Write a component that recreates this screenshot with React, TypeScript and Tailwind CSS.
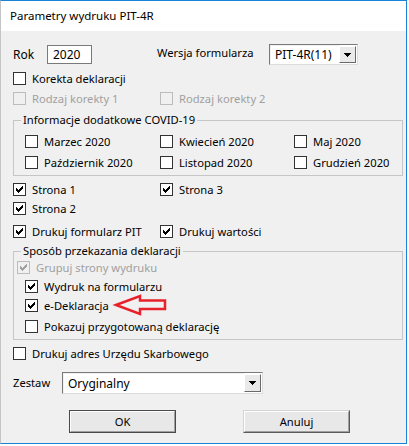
import React from "react";

const CHECK: [number, number][] = [
  [6, 0], [5, 1], [6, 1], [0, 2], [4, 2], [5, 2], [6, 2], [0, 3], [1, 3], [3, 3], [4, 3], [5, 3],
  [0, 4], [1, 4], [2, 4], [3, 4], [4, 4], [1, 5], [2, 5], [3, 5], [2, 6],
];

function Box({ checked = false, disabled = false }: { checked?: boolean; disabled?: boolean }) {
  return (
    <div
      className={
        disabled
          ? "w-[13px] h-[13px] shrink-0 border border-[#bcbcbc] bg-[#f0f0f0]"
          : "w-[13px] h-[13px] shrink-0 border border-[#333333] bg-white"
      }
    >
      {checked && (
        <svg width="11" height="11" viewBox="0 0 11 11" shapeRendering="crispEdges" className="block">
          {CHECK.map(([x, y], i) => (
            <rect key={i} x={x + 2} y={y + 2} width="1" height="1" fill={disabled ? "#a0a0a0" : "#000000"} />
          ))}
        </svg>
      )}
    </div>
  );
}

function Cb({
  label,
  checked = false,
  disabled = false,
  className = "",
}: {
  label: string;
  checked?: boolean;
  disabled?: boolean;
  className?: string;
}) {
  return (
    <div className={"flex items-center h-[13px] " + className}>
      <Box checked={checked} disabled={disabled} />
      <span className={disabled ? "ml-[6px] leading-none whitespace-nowrap text-[#a0a0a0]" : "ml-[6px] leading-none whitespace-nowrap"}>
        {label}
      </span>
    </div>
  );
}

function DropBtn() {
  return (
    <div className="w-[17px] h-full shrink-0 border border-t-white border-l-white border-r-[#696969] border-b-[#696969] bg-[#e9e9e9] flex items-center justify-center">
      <svg width="7" height="4" viewBox="0 0 7 4" shapeRendering="crispEdges">
        <path d="M0 0h7v1h-1v1h-1v1h-1v1h-1v-1h-1v-1h-1v-1h-1z" fill="#000" />
      </svg>
    </div>
  );
}

function Select({ value, w }: { value: string; w: string }) {
  return (
    <div className={"h-[21px] border border-[#7a7a7a] border-r-[#dcdcdc] border-b-[#dcdcdc] bg-white flex items-stretch " + w}>
      <div className="flex-1 flex items-center pl-[4px] border border-[#f0f0f0] border-r-0 border-b-0">
        <span className="leading-none whitespace-nowrap text-[12px]">{value}</span>
      </div>
      <div className="py-[1px] pr-[1px] flex">
        <DropBtn />
      </div>
    </div>
  );
}

export default function App() {
  return (
    <div
      className="relative w-[409px] h-[446px] bg-white text-[11.2px] text-black overflow-hidden"
      style={{ fontFamily: '"Noto Sans", "Liberation Sans", sans-serif' }}
    >
      <div className="w-[407px] h-[444px] border-t border-r border-b border-[#1883d7] border-l border-l-[#c4c4c4] flex flex-col">
        {/* title bar */}
        <div className="h-[30px] bg-white flex items-center pl-[9px] shrink-0">
          <span className="leading-none text-[11.5px]">Parametry wydruku PIT-4R</span>
        </div>
        {/* body */}
        <div className="flex-1 bg-[#f0f0f0] pl-[12px] flex flex-col">
          {/* Rok / Wersja */}
          <div className="mt-[13px] h-[21px] flex items-center">
            <span className="w-[34px] leading-none text-[12px]">Rok</span>
            <div className="w-[45px] h-[19px] border border-[#7a7a7a] bg-white flex items-center pl-[5px]">
              <span className="leading-none text-[12px]">2020</span>
            </div>
            <span className="ml-[65px] w-[112px] leading-none whitespace-nowrap -mt-[4px]">Wersja formularza</span>
            <Select value="PIT-4R(11)" w="w-[89px]" />
          </div>
          <Cb className="mt-[7px]" label="Korekta deklaracji" />
          <div className="mt-[7px] flex">
            <div className="w-[147px]">
              <Cb label="Rodzaj korekty 1" disabled />
            </div>
            <Cb label="Rodzaj korekty 2" disabled />
          </div>

          {/* Group 1 */}
          <div className="relative mt-[15px] w-[390px] h-[56px] border border-[#c6c6c6] pl-[11px] pt-[14px]">
            <span className="absolute left-[7px] -top-[8px] px-[2px] bg-[#f0f0f0] leading-[14px] whitespace-nowrap">
              Informacje dodatkowe COVID-19
            </span>
            <div className="flex">
              <div className="w-[135px]"><Cb label="Marzec 2020" /></div>
              <div className="w-[134px]"><Cb label="Kwiecień 2020" /></div>
              <Cb label="Maj 2020" />
            </div>
            <div className="flex mt-[8px]">
              <div className="w-[135px]"><Cb label="Październik 2020" /></div>
              <div className="w-[134px]"><Cb label="Listopad 2020" /></div>
              <Cb label="Grudzień 2020" />
            </div>
          </div>

          <div className="mt-[7px] flex">
            <div className="w-[147px]"><Cb label="Strona 1" checked /></div>
            <Cb label="Strona 3" checked />
          </div>
          <Cb className="mt-[6px]" label="Strona 2" checked />
          <div className="mt-[10px] flex">
            <div className="w-[147px]"><Cb label="Drukuj formularz PIT" checked /></div>
            <Cb label="Drukuj wartości" checked />
          </div>

          {/* Group 2 */}
          <div className="relative mt-[13px] w-[390px] h-[89px] border border-[#c6c6c6] pl-[3px] pt-[9px]">
            <span className="absolute left-[7px] -top-[8px] px-[2px] bg-[#f0f0f0] leading-[14px] whitespace-nowrap">
              Sposób przekazania deklaracji
            </span>
            <Cb label="Grupuj strony wydruku" checked disabled />
            <div className="pl-[8px]">
              <Cb className="mt-[6px]" label="Wydruk na formularzu" checked />
              <Cb className="mt-[6px]" label="e-Deklaracja" checked />
              <Cb className="mt-[8px]" label="Pokazuj przygotowaną deklarację" />
            </div>
          </div>

          <Cb className="mt-[7px]" label="Drukuj adres Urzędu Skarbowego" />

          {/* Zestaw */}
          <div className="mt-[12px] h-[22px] flex items-center">
            <span className="w-[49px] leading-none">Zestaw</span>
            <Select value="Oryginalny" w="w-[201px] h-[22px]" />
          </div>

          {/* Buttons */}
          <div className="mt-[16px] flex">
            <div className="ml-[56px] w-[107px] h-[23px] border border-[#4a4a4a] flex">
              <div className="flex-1 border border-t-white border-l-white border-r-[#a0a0a0] border-b-[#a0a0a0] bg-[#e8e8e8] flex items-center justify-center">
                <span className="leading-none">OK</span>
              </div>
            </div>
            <div className="ml-[67px] w-[107px] h-[23px] border border-t-[#d4d4d4] border-l-[#d4d4d4] border-r-[#5a5a5a] border-b-[#5a5a5a] flex">
              <div className="flex-1 border border-t-white border-l-white border-r-[#a0a0a0] border-b-[#a0a0a0] bg-[#e8e8e8] flex items-center justify-center">
                <span className="leading-none">Anuluj</span>
              </div>
            </div>
          </div>
        </div>
      </div>

      {/* red arrow annotation */}
      <svg className="absolute left-0 top-0 pointer-events-none" width="409" height="446" viewBox="0 0 409 446">
        <path
          d="M116 305 L140 296 L140 300.5 L165 300.5 L165 309 L140 309 L140 314 Z"
          fill="none"
          stroke="#e8202a"
          strokeWidth="2.5"
          strokeLinejoin="miter"
        />
      </svg>
    </div>
  );
}
